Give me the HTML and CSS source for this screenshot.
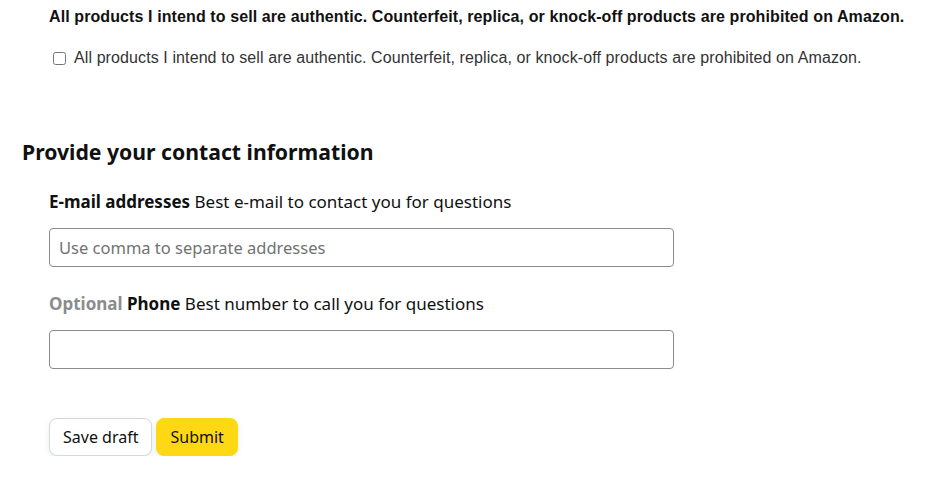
FILE: index.html
```html
<!DOCTYPE html>
<html>
<head>
<meta charset="utf-8">
<link rel="stylesheet" href="styles.css">
</head>
<body>
<div class="page">
  <section class="auth">
    <p class="auth-title">All products I intend to sell are authentic. Counterfeit, replica, or knock-off products are prohibited on Amazon.</p>
    <label class="check-row"><input type="checkbox" class="check"><span>All products I intend to sell are authentic. Counterfeit, replica, or knock-off products are prohibited on Amazon.</span></label>
  </section>
  <section class="contact">
    <h2 class="heading">Provide your contact information</h2>
    <div class="field">
      <div class="label"><b>E-mail addresses</b> Best e-mail to contact you for questions</div>
      <input class="text-input" type="text" placeholder="Use comma to separate addresses">
    </div>
    <div class="field">
      <div class="label"><span class="optional">Optional</span> <b>Phone</b> Best number to call you for questions</div>
      <input class="text-input" type="text">
    </div>
    <div class="actions">
      <button class="btn btn-secondary">Save draft</button>
      <button class="btn btn-primary">Submit</button>
    </div>
  </section>
</div>
</body>
</html>
```

FILE: styles.css
```css
html, body {
  margin: 0;
  padding: 0;
  background: #fff;
}
.page {
  padding: 0 0 0 22px;
  color: #0f1111;
}
.auth {
  padding: 8px 0 0 27px;
  font-family: "Liberation Sans", Arial, sans-serif;
}
.auth-title {
  margin: 0;
  font-size: 16px;
  font-weight: bold;
  line-height: 18px;
  letter-spacing: 0.1px;
  color: #111;
}
.check-row {
  display: flex;
  align-items: center;
  margin-top: 23px;
  font-size: 16px;
  line-height: 18px;
  letter-spacing: 0.1px;
  color: #333;
}
.check {
  margin: 0 8px 0 4px;
  width: 13px;
  height: 13px;
}
.contact {
  padding-top: 71px;
  font-family: "Noto Sans", sans-serif;
}
.heading {
  margin: 0;
  font-size: 21.2px;
  font-weight: bold;
  line-height: 28px;
}
.field {
  margin-left: 27px;
  margin-top: 25px;
}
.field + .field {
  margin-top: 26px;
}
.label {
  font-size: 17px;
  line-height: 22px;
}
.label b { font-weight: bold; }
.optional {
  color: #8c8c8c;
  font-weight: bold;
}
.text-input {
  display: block;
  box-sizing: border-box;
  width: 625px;
  height: 39px;
  margin-top: 15px;
  border: 1px solid #888c8c;
  border-radius: 4px;
  padding: 0 9px;
  font-family: "Noto Sans", sans-serif;
  font-size: 16.5px;
  color: #0f1111;
}
.text-input::placeholder {
  color: #6f7373;
}
.actions {
  display: flex;
  gap: 4px;
  margin: 49px 0 0 27px;
}
.btn {
  height: 38px;
  border-radius: 8px;
  font-family: "Noto Sans", sans-serif;
  font-size: 16px;
  color: #0f1111;
  padding: 0 13px;
  box-shadow: 0 2px 5px rgba(213,217,217,0.5);
}
.btn-secondary {
  background: #fff;
  border: 1px solid #d5d9d9;
}
.btn-primary {
  background: #ffd814;
  border: 1px solid #ffd814;
}
```
